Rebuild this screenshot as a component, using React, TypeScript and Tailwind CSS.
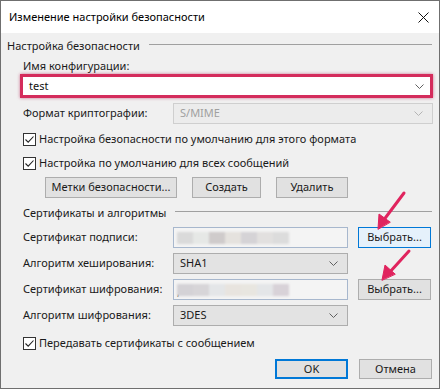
import React from 'react';

const font = { fontFamily: '"Noto Sans", "Open Sans", sans-serif' };

function Chevron({ muted }: { muted?: boolean }) {
  return (
    <svg width="9" height="5" viewBox="0 0 9 5" className="shrink-0">
      <path d="M0.5 0.5L4.5 4.5L8.5 0.5" fill="none" stroke={muted ? '#b4b4b4' : '#606060'} strokeWidth="1" />
    </svg>
  );
}

function CheckRow({ label }: { label: string }) {
  return (
    <div className="flex items-center h-[20px] pl-[16px]">
      <div className="w-[13px] h-[13px] border border-[#333] bg-white flex items-center justify-center">
        <svg width="11" height="11" viewBox="0 0 11 11">
          <path d="M1.5 5.5L4.2 8.2L9.5 2.5" fill="none" stroke="#222" strokeWidth="1.1" />
        </svg>
      </div>
      <span className="ml-[3px] text-[11px] text-[#1a1a1a] whitespace-nowrap">{label}</span>
    </div>
  );
}

function Combo({ value, muted, w = 'w-[175px]' }: { value: string; muted?: boolean; w?: string }) {
  return (
    <div
      className={
        muted
          ? `${w} h-full flex items-center justify-between pl-[6px] pr-[9px] bg-[#ececec] border border-[#cfcfcf] text-[#a0a0a0]`
          : `${w} h-full flex items-center justify-between pl-[6px] pr-[9px] bg-[#e3e3e3] border border-[#adadad] text-[#1a1a1a]`
      }
    >
      <span className="text-[11px]">{value}</span>
      <Chevron muted={muted} />
    </div>
  );
}

function Btn({ label, w, focus, hover }: { label: string; w: string; focus?: boolean; hover?: boolean }) {
  let cls = 'bg-[#e1e1e1] border border-[#adadad]';
  if (hover) cls = 'bg-[#e5f1fb] border border-[#0078d7]';
  if (focus) cls = 'bg-[#e1e1e1] border-2 border-[#0078d7]';
  return (
    <div className={`${w} h-full flex items-center justify-center text-[11px] text-[#1a1a1a] whitespace-nowrap ${cls}`}>
      {label}
    </div>
  );
}

function BlurField({ blocks, comma }: { blocks: string[]; comma?: boolean }) {
  return (
    <div className="w-[175px] h-full bg-[#f4f4f4] border border-[#a7b7cd] flex items-center pl-[3px] relative">
      {comma && <span className="absolute left-[3px] top-[5px] text-[10px] text-[#555]">,</span>}
      <div className="flex h-[12px] blur-[1px]">
        {blocks.map((c, i) => (
          <div key={i} className="w-[16px] h-full" style={{ backgroundColor: c }} />
        ))}
      </div>
    </div>
  );
}

function Row({ label, children, mt }: { label: string; children: React.ReactNode; mt: string }) {
  return (
    <div className={`flex items-center h-[21px] ${mt}`}>
      <span className="w-[166px] pl-[16px] text-[11px] text-[#1a1a1a] shrink-0 whitespace-nowrap">{label}</span>
      <div className="h-full flex items-center gap-[10px]">{children}</div>
    </div>
  );
}

function GroupHeader({ label, mt, indent }: { label: string; mt: string; indent?: boolean }) {
  return (
    <div className={`flex items-center h-[18px] ${mt} ${indent ? 'pl-[16px]' : ''}`}>
      <span className="text-[11px] text-[#1a1a1a] whitespace-nowrap">{label}</span>
      <div className="flex-1 h-px bg-[#a0a0a0] ml-[9px] mr-[1px] -mt-[3px]" />
    </div>
  );
}

export default function App() {
  return (
    <div className="w-[440px] h-[389px] border border-[#6f6f6f] flex flex-col relative bg-[#f0f0f0]" style={font}>
      {/* title bar */}
      <div className="h-[32px] bg-white flex items-center justify-between pl-[8px] pr-[10px] shrink-0">
        <span className="text-[11px] text-black">Изменение настройки безопасности</span>
        <svg width="11" height="11" viewBox="0 0 11 11">
          <path d="M0.5 0.5L10.5 10.5M10.5 0.5L0.5 10.5" stroke="#111" strokeWidth="1" />
        </svg>
      </div>

      {/* body */}
      <div className="flex-1 flex flex-col pl-[6px] pr-[6px]">
        <GroupHeader label="Настройка безопасности" mt="mt-[4px]" />

        <div className="h-[16px] mt-[3px] pl-[16px] flex items-center text-[11px] text-[#1a1a1a]">Имя конфигурации:</div>

        <div className="ml-[13px] h-[24px] border-[3px] border-[#d42c5c] shadow-[0_0_3px_rgba(180,30,80,0.6)] bg-white flex items-center justify-between pl-[6px] pr-[6px]">
          <span className="text-[11px] text-[#111]">test</span>
          <Chevron />
        </div>

        <Row label="Формат криптографии:" mt="mt-[5px]">
          <Combo value="S/MIME" muted w="w-[260px]" />
        </Row>

        <div className="mt-[5px]">
          <CheckRow label="Настройка безопасности по умолчанию для этого формата" />
        </div>
        <div className="mt-[4px]">
          <CheckRow label="Настройка по умолчанию для всех сообщений" />
        </div>

        <div className="h-[21px] mt-[4px] flex pl-[38px] gap-[15px]">
          <Btn label="Метки безопасности..." w="w-[132px]" />
          <Btn label="Создать" w="w-[69px]" />
          <Btn label="Удалить" w="w-[72px]" />
        </div>

        <GroupHeader label="Сертификаты и алгоритмы" mt="mt-[6px]" indent />

        <Row label="Сертификат подписи:" mt="mt-[5px]">
          <BlurField blocks={['#dadada', '#e6e8e6', '#cfcbcb', '#e5e2de', '#d5d3d6', '#e2e0df', '#dcdcdc']} />
          <Btn label="Выбрать..." w="w-[73px]" hover />
        </Row>

        <Row label="Алгоритм хеширования:" mt="mt-[5px]">
          <Combo value="SHA1" />
        </Row>

        <Row label="Сертификат шифрования:" mt="mt-[5px]">
          <BlurField comma blocks={['#d4d2d6', '#d7d5d8', '#e4e6e8', '#e8e4df', '#e8e6e0', '#e4e6e8', '#d8d2d8']} />
          <Btn label="Выбрать..." w="w-[73px]" />
        </Row>

        <Row label="Алгоритм шифрования:" mt="mt-[5px]">
          <Combo value="3DES" />
        </Row>

        <div className="mt-[7px]">
          <CheckRow label="Передавать сертификаты с сообщением" />
        </div>

        <div className="h-[20px] mt-[6px] flex justify-end gap-[11px] pr-[1px]">
          <Btn label="OK" w="w-[73px]" focus />
          <Btn label="Отмена" w="w-[73px]" />
        </div>
      </div>

      {/* annotation arrows */}
      <svg className="absolute left-0 top-0 pointer-events-none" width="440" height="389">
        <g stroke="#e0245e" strokeWidth="3" strokeLinecap="round" fill="#e0245e">
          <line x1="403" y1="192" x2="382" y2="220" />
          <polygon points="377,228 378,213 389,221" strokeWidth="1" />
          <line x1="408" y1="250" x2="388" y2="272" />
          <polygon points="381,279 384,264 394,273" strokeWidth="1" />
        </g>
      </svg>
    </div>
  );
}
